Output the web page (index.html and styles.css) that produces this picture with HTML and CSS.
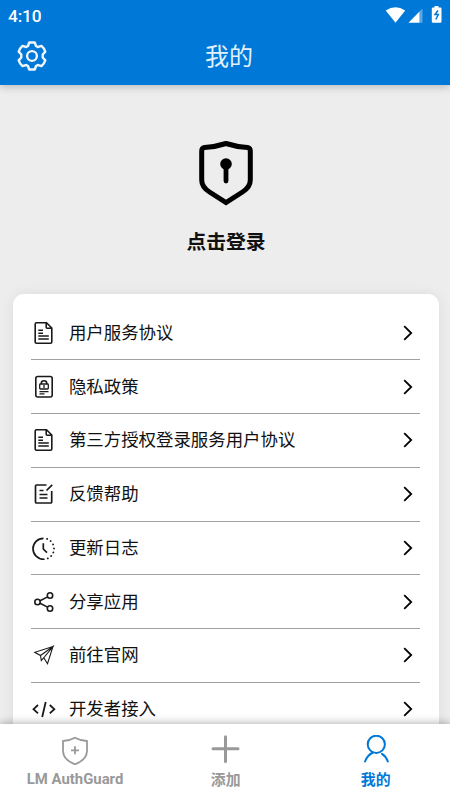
FILE: index.html
```html
<!DOCTYPE html>
<html lang="zh-CN">
<head>
<meta charset="utf-8">
<title>我的</title>
<link rel="stylesheet" href="styles.css">
</head>
<body>
<svg class="defs" width="0" height="0">
  <symbol id="doc" viewBox="0 0 24 24"><path d="M14.500 1.700H4.400Q3.200 1.700 3.200 2.900V21.100Q3.200 22.300 4.400 22.300H18.600Q19.800 22.300 19.800 21.100V7ZM14.200 2V6.200Q14.200 7.200 15.200 7.200H19.600" stroke-width="1.600"/><path d="M6.300 9.300H11M6.300 12.300H11M6.300 15H16.800M6.300 18H16.800" stroke-width="1.500"/></symbol>
  <symbol id="arrow" viewBox="0 0 10 16"><path d="M1.200 1.200 8.200 8 1.200 14.800" stroke-width="1.800"/></symbol>
</svg>
<div class="app">
  <header class="header">
    <div class="status">
      <span class="time">4:10</span>
      <svg class="indicators" width="58" height="18" viewBox="0 0 58 18"><g fill="#fff"><path d="M.7 5.500Q10.500-1 20.200 5.500L10.500 17.800Z"/><path d="M23.500 17.800 34.500 6.500V17.800Z"/><path d="M34.500 6.500 37.500 3.500V17.800H34.500Z" opacity=".35"/><path d="M49.500 1H53.500V2.600H55.300Q56.500 2.600 56.500 3.800V16.500Q56.500 17.700 55.300 17.700H48Q46.800 17.700 46.800 16.500V3.800Q46.800 2.600 48 2.600H49.500Z"/></g><path d="M53 5.500 50 9.500H53.300L50.800 14.500" fill="none" stroke="#0078d7" stroke-width="1.500"/></svg>
    </div>
    <div class="bar">
      <svg class="gear" width="32" height="32" viewBox="0 0 32 32"><path d="M13.200 2.500H18.800L20 6 21.700 7 25.500 5.900Q28.200 8.200 29.300 11.600L26.700 14.500V17.500L29.300 20.400Q28.200 23.800 25.500 26.100L21.700 25 20 26 18.800 29.500H13.200L12 26 10.300 25 6.500 26.100Q3.800 23.800 2.700 20.400L5.300 17.500V14.500L2.700 11.600Q3.800 8.200 6.500 5.900L10.300 7 12 6Z"/><circle cx="16" cy="16" r="4.900"/></svg>
      <h1>我的</h1>
    </div>
  </header>
  <main>
    <section class="login">
      <svg width="56" height="66" viewBox="0 0 56 66"><path d="M28 3.500Q39 7 49.500 7.500Q52.300 8 52.300 11V40Q52.300 47 44.500 52L28 62.500 11.500 52Q3.700 47 3.700 40V11Q3.700 8 6.500 7.500Q17 7 28 3.500Z" fill="none" stroke="#000" stroke-width="5"/><circle cx="28" cy="24" r="5.800"/><path d="M28 24V41" stroke="#000" stroke-width="4.800" stroke-linecap="round"/></svg>
      <h2>点击登录</h2>
    </section>
    <ul class="card">
      <li><svg class="icon"><use href="#doc"/></svg><span>用户服务协议</span><svg class="arrow"><use href="#arrow"/></svg></li>
      <li><svg class="icon" viewBox="0 0 24 24"><rect x="3.800" y="1.500" width="16.400" height="20.500" rx="2" stroke-width="1.600"/><path d="M9.300 9V8Q9.300 5.700 12 5.700T14.700 8V9" stroke-width="1.600"/><rect x="7.700" y="9" width="8.600" height="5" rx=".8" stroke-width="1.300"/><path d="M12 10V13M7.500 16.700H16.500M7.500 18.800H12.500" stroke-width="1.300"/></svg><span>隐私政策</span><svg class="arrow"><use href="#arrow"/></svg></li>
      <li><svg class="icon"><use href="#doc"/></svg><span>第三方授权登录服务用户协议</span><svg class="arrow"><use href="#arrow"/></svg></li>
      <li><svg class="icon" viewBox="0 0 24 24"><path d="M14.500 3H4.500Q3.500 3 3.500 4V20Q3.500 21 4.500 21H18.700Q19.700 21 19.700 20V9M14.500 8.500 20.200 2.800" stroke-width="1.700"/><path d="M7.500 8.500H11.500M7.500 12.500H15.500M7.500 16H15.500" stroke-width="1.500"/></svg><span>反馈帮助</span><svg class="arrow"><use href="#arrow"/></svg></li>
      <li><svg class="icon" viewBox="0 0 24 24"><path d="M11.500 2.300A10.500 10.500 0 0 0 11.500 23.300" stroke-width="1.700"/><path d="M11.500 2.300A10.500 10.500 0 0 1 11.500 23.300" stroke-width="1.800" stroke-dasharray=".1 4.020" stroke-dashoffset="-3.600" stroke-linecap="round"/><path d="M11.300 7.300V13L15 16.700" stroke-width="1.700"/></svg><span>更新日志</span><svg class="arrow"><use href="#arrow"/></svg></li>
      <li><svg class="icon" viewBox="0 0 24 24"><g stroke-width="1.600"><circle cx="5.500" cy="12" r="2.700"/><circle cx="18" cy="5.500" r="2.700"/><circle cx="18" cy="18.500" r="2.700"/><path d="M8 10.700 15.600 6.900M8 13.300 15.600 17.100"/></g></svg><span>分享应用</span><svg class="arrow"><use href="#arrow"/></svg></li>
      <li><svg class="icon" viewBox="0 0 24 24"><path d="M21 3.500 2.800 9.300 8.500 12.500 21 3.500 15.500 20.700 11.800 14.700ZM8.500 12.500 9.300 17.500 11.800 14.700" stroke-width="1.100"/></svg><span>前往官网</span><svg class="arrow"><use href="#arrow"/></svg></li>
      <li><svg class="icon" viewBox="0 0 24 24"><path d="M6 8 1.500 12.200 6 16.400M17.800 8 22.300 12.200 17.800 16.400M13.700 5 10.200 20" stroke-width="1.800"/></svg><span>开发者接入</span><svg class="arrow"><use href="#arrow"/></svg></li>
    </ul>
  </main>
  <nav class="tabs">
    <div class="tab"><svg width="30" height="30" viewBox="0 0 30 30"><path d="M15 2.700Q20.500 5.700 27 6V16Q26.800 25 15 29.300Q3.200 25 3 16V6Q9.500 5.700 15 2.700Z" stroke-width="1.800"/><path d="M15 11.300V19.300M11 15.300H19" stroke-width="1.800"/></svg><span>LM AuthGuard</span></div>
    <div class="tab"><svg width="30" height="30" viewBox="0 0 30 30"><path d="M15.500 1.800V26.500M3 13.700H28" stroke-width="3" stroke-linecap="round"/></svg><span>添加</span></div>
    <div class="tab active"><svg width="30" height="30" viewBox="0 0 30 30"><circle cx="16.300" cy="9.300" r="8.600" stroke-width="2"/><path d="M5 26.500Q7.500 20 13 17.500M22 18.800Q26.300 21.500 27.800 26.500" stroke-width="2" stroke-linecap="round"/></svg><span>我的</span></div>
  </nav>
</div>
</body>
</html>
```
FILE: styles.css
```css
* { box-sizing: border-box; }
body { margin: 0; font-family: Roboto, "Noto Sans CJK SC", sans-serif; color: #111; }
h1, h2, ul { margin: 0; padding: 0; }
svg { display: block; flex: none; }
.defs { position: absolute; }
.app { width: 450px; height: 800px; display: flex; flex-direction: column; overflow: hidden; background: #ededed; }
.header { flex: none; height: 84.500px; background: #0078d7; color: #fff; box-shadow: 0 2px 8px rgba(0, 0, 0, .22); z-index: 1; }
.status { display: flex; justify-content: space-between; height: 31px; padding: 5px 7px 0 8px; }
.time { font-size: 17.300px; line-height: 22px; font-weight: 500; letter-spacing: -.15px; }
.bar { display: grid; grid-template-columns: 1fr auto 1fr; align-items: center; height: 50px; padding: 0 8px 0 16px; }
.bar h1 { font-size: 24px; font-weight: 400; line-height: 50px; padding-top: 2px; margin: -1px 0 0; color: #e3f0fb; }
.gear { margin-bottom: 2px; fill: none; stroke: #eef5fc; stroke-width: 2.400; stroke-linejoin: round; }
main { flex: 1; min-height: 0; overflow: hidden; padding: 0 11.500px 0 12.500px; }
.login { height: 209.500px; padding-top: 55px; display: flex; flex-direction: column; align-items: center; }
.login h2 { margin-top: 21px; padding-left: 1px; font-size: 19.800px; line-height: 32px; font-weight: 700; }
.card { list-style: none; background: #fff; border-radius: 11px; padding: 12.500px 18.500px; box-shadow: 0 0 14px rgba(0, 0, 0, .07); }
.card li { display: flex; align-items: center; height: 53.770px; border-bottom: 1.300px solid #a0a0a0; font-size: 17.430px; line-height: 26px; }
.card span { flex: 1; margin-left: 13.400px; }
.icon { width: 24px; height: 24px; margin-left: .5px; }
.icon, .arrow { fill: none; stroke: #1a1a1a; }
.arrow { width: 10px; height: 16px; margin-right: 7.500px; stroke: #000; }
.tabs { flex: none; height: 76px; display: flex; background: #fff; box-shadow: 0 -1px 8px rgba(0, 0, 0, .3); z-index: 1; }
.tab { flex: 1; display: flex; flex-direction: column; align-items: center; padding-top: 11px; color: #999; font-size: 14.900px; font-weight: 700; line-height: 20px; }
.tab svg { fill: none; stroke: currentColor; }
.tab span { margin-top: 5px; }
.tab:first-child span { margin-top: 4px; }
.tab:not(:first-child) span { padding-left: 1.500px; }
.tab.active { color: #0078d7; }
```
